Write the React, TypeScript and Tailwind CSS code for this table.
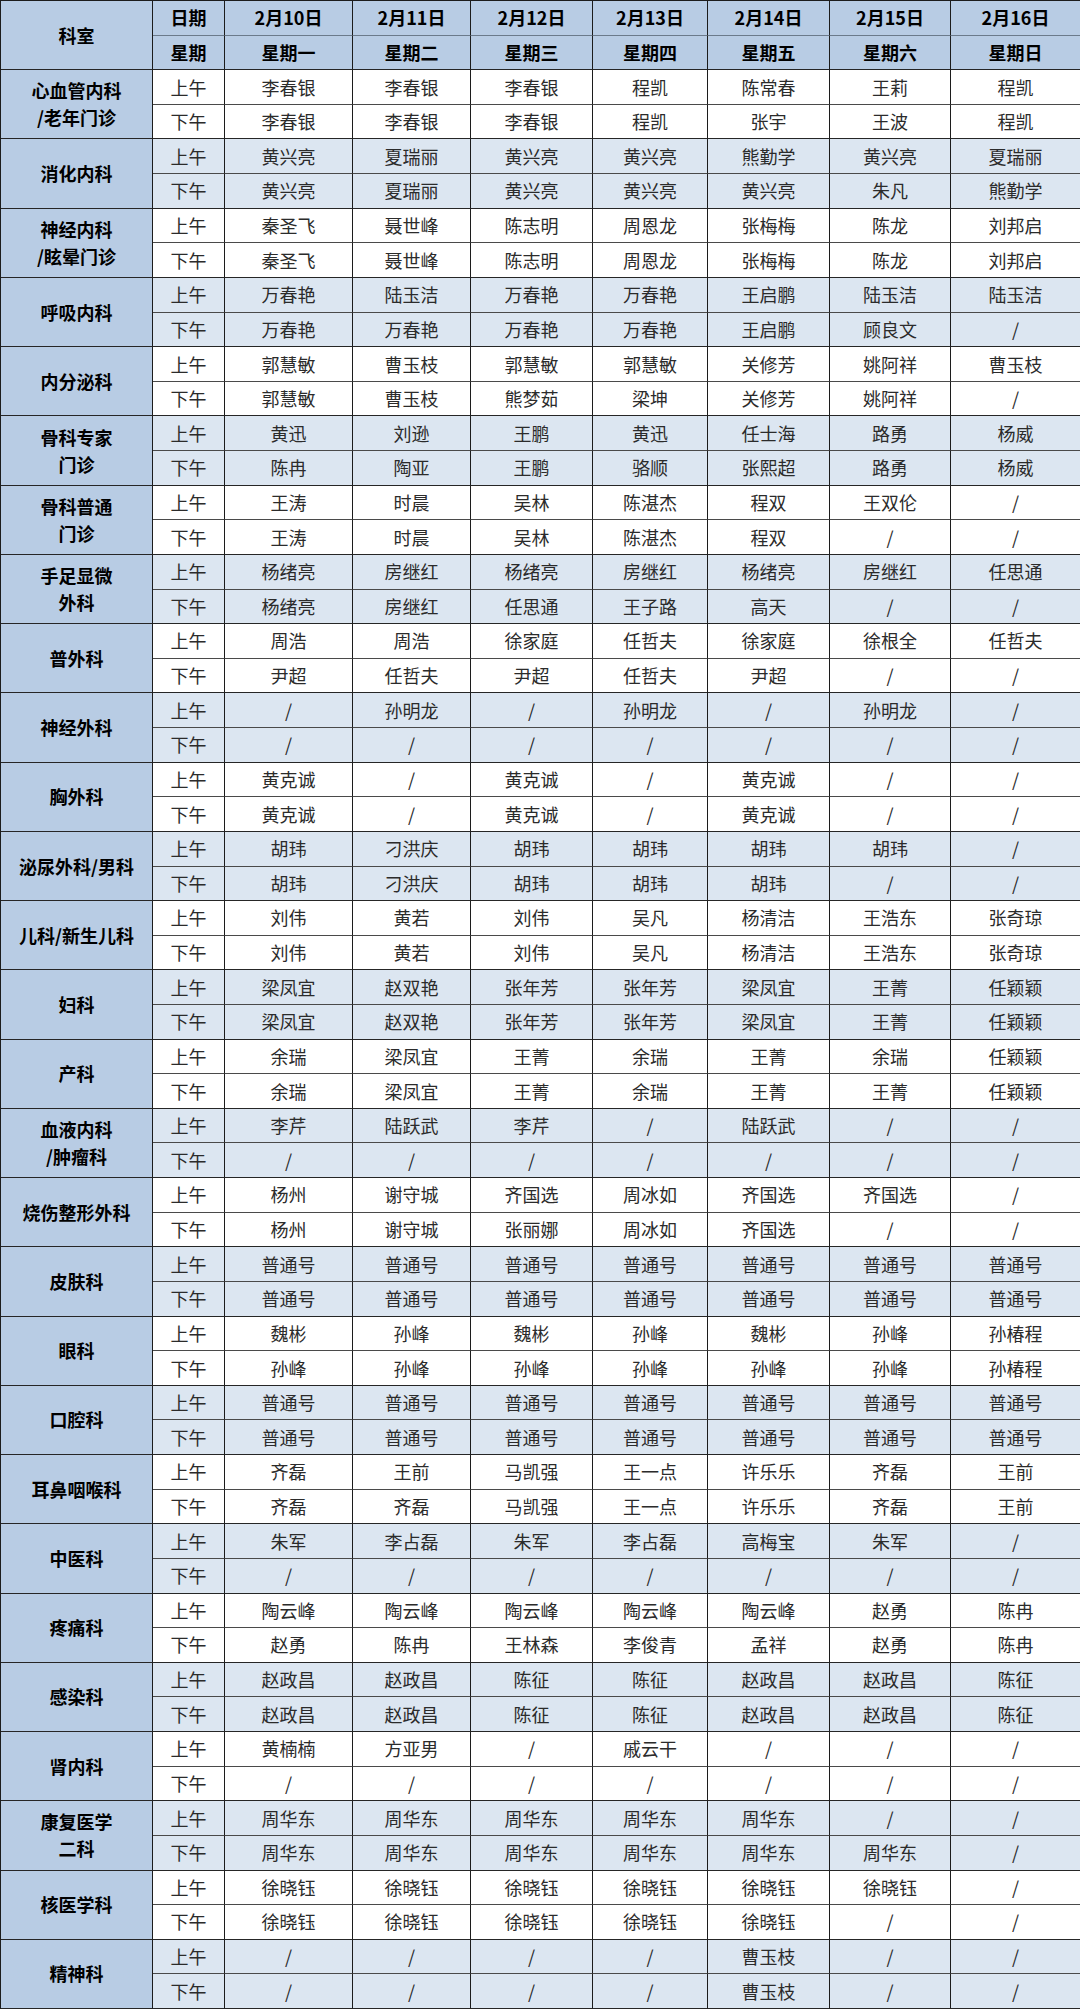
const days = [
  { date: "2月10日", week: "星期一" },
  { date: "2月11日", week: "星期二" },
  { date: "2月12日", week: "星期三" },
  { date: "2月13日", week: "星期四" },
  { date: "2月14日", week: "星期五" },
  { date: "2月15日", week: "星期六" },
  { date: "2月16日", week: "星期日" },
];

const S = "/";

// name: department label (\n = line break), am / pm: doctors for each day
const schedule: { name: string; am: string[]; pm: string[] }[] = [
  {
    name: "心血管内科\n/老年门诊",
    am: ["李春银", "李春银", "李春银", "程凯", "陈常春", "王莉", "程凯"],
    pm: ["李春银", "李春银", "李春银", "程凯", "张宇", "王波", "程凯"],
  },
  {
    name: "消化内科",
    am: ["黄兴亮", "夏瑞丽", "黄兴亮", "黄兴亮", "熊勤学", "黄兴亮", "夏瑞丽"],
    pm: ["黄兴亮", "夏瑞丽", "黄兴亮", "黄兴亮", "黄兴亮", "朱凡", "熊勤学"],
  },
  {
    name: "神经内科\n/眩晕门诊",
    am: ["秦圣飞", "聂世峰", "陈志明", "周恩龙", "张梅梅", "陈龙", "刘邦启"],
    pm: ["秦圣飞", "聂世峰", "陈志明", "周恩龙", "张梅梅", "陈龙", "刘邦启"],
  },
  {
    name: "呼吸内科",
    am: ["万春艳", "陆玉洁", "万春艳", "万春艳", "王启鹏", "陆玉洁", "陆玉洁"],
    pm: ["万春艳", "万春艳", "万春艳", "万春艳", "王启鹏", "顾良文", S],
  },
  {
    name: "内分泌科",
    am: ["郭慧敏", "曹玉枝", "郭慧敏", "郭慧敏", "关修芳", "姚阿祥", "曹玉枝"],
    pm: ["郭慧敏", "曹玉枝", "熊梦茹", "梁坤", "关修芳", "姚阿祥", S],
  },
  {
    name: "骨科专家\n门诊",
    am: ["黄迅", "刘逊", "王鹏", "黄迅", "任士海", "路勇", "杨威"],
    pm: ["陈冉", "陶亚", "王鹏", "骆顺", "张熙超", "路勇", "杨威"],
  },
  {
    name: "骨科普通\n门诊",
    am: ["王涛", "时晨", "吴林", "陈湛杰", "程双", "王双伦", S],
    pm: ["王涛", "时晨", "吴林", "陈湛杰", "程双", S, S],
  },
  {
    name: "手足显微\n外科",
    am: ["杨绪亮", "房继红", "杨绪亮", "房继红", "杨绪亮", "房继红", "任思通"],
    pm: ["杨绪亮", "房继红", "任思通", "王子路", "高天", S, S],
  },
  {
    name: "普外科",
    am: ["周浩", "周浩", "徐家庭", "任哲夫", "徐家庭", "徐根全", "任哲夫"],
    pm: ["尹超", "任哲夫", "尹超", "任哲夫", "尹超", S, S],
  },
  {
    name: "神经外科",
    am: [S, "孙明龙", S, "孙明龙", S, "孙明龙", S],
    pm: [S, S, S, S, S, S, S],
  },
  {
    name: "胸外科",
    am: ["黄克诚", S, "黄克诚", S, "黄克诚", S, S],
    pm: ["黄克诚", S, "黄克诚", S, "黄克诚", S, S],
  },
  {
    name: "泌尿外科/男科",
    am: ["胡玮", "刁洪庆", "胡玮", "胡玮", "胡玮", "胡玮", S],
    pm: ["胡玮", "刁洪庆", "胡玮", "胡玮", "胡玮", S, S],
  },
  {
    name: "儿科/新生儿科",
    am: ["刘伟", "黄若", "刘伟", "吴凡", "杨清洁", "王浩东", "张奇琼"],
    pm: ["刘伟", "黄若", "刘伟", "吴凡", "杨清洁", "王浩东", "张奇琼"],
  },
  {
    name: "妇科",
    am: ["梁凤宜", "赵双艳", "张年芳", "张年芳", "梁凤宜", "王菁", "任颖颖"],
    pm: ["梁凤宜", "赵双艳", "张年芳", "张年芳", "梁凤宜", "王菁", "任颖颖"],
  },
  {
    name: "产科",
    am: ["余瑞", "梁凤宜", "王菁", "余瑞", "王菁", "余瑞", "任颖颖"],
    pm: ["余瑞", "梁凤宜", "王菁", "余瑞", "王菁", "王菁", "任颖颖"],
  },
  {
    name: "血液内科\n/肿瘤科",
    am: ["李芹", "陆跃武", "李芹", S, "陆跃武", S, S],
    pm: [S, S, S, S, S, S, S],
  },
  {
    name: "烧伤整形外科",
    am: ["杨州", "谢守城", "齐国选", "周冰如", "齐国选", "齐国选", S],
    pm: ["杨州", "谢守城", "张丽娜", "周冰如", "齐国选", S, S],
  },
  {
    name: "皮肤科",
    am: ["普通号", "普通号", "普通号", "普通号", "普通号", "普通号", "普通号"],
    pm: ["普通号", "普通号", "普通号", "普通号", "普通号", "普通号", "普通号"],
  },
  {
    name: "眼科",
    am: ["魏彬", "孙峰", "魏彬", "孙峰", "魏彬", "孙峰", "孙椿程"],
    pm: ["孙峰", "孙峰", "孙峰", "孙峰", "孙峰", "孙峰", "孙椿程"],
  },
  {
    name: "口腔科",
    am: ["普通号", "普通号", "普通号", "普通号", "普通号", "普通号", "普通号"],
    pm: ["普通号", "普通号", "普通号", "普通号", "普通号", "普通号", "普通号"],
  },
  {
    name: "耳鼻咽喉科",
    am: ["齐磊", "王前", "马凯强", "王一点", "许乐乐", "齐磊", "王前"],
    pm: ["齐磊", "齐磊", "马凯强", "王一点", "许乐乐", "齐磊", "王前"],
  },
  {
    name: "中医科",
    am: ["朱军", "李占磊", "朱军", "李占磊", "高梅宝", "朱军", S],
    pm: [S, S, S, S, S, S, S],
  },
  {
    name: "疼痛科",
    am: ["陶云峰", "陶云峰", "陶云峰", "陶云峰", "陶云峰", "赵勇", "陈冉"],
    pm: ["赵勇", "陈冉", "王林森", "李俊青", "孟祥", "赵勇", "陈冉"],
  },
  {
    name: "感染科",
    am: ["赵政昌", "赵政昌", "陈征", "陈征", "赵政昌", "赵政昌", "陈征"],
    pm: ["赵政昌", "赵政昌", "陈征", "陈征", "赵政昌", "赵政昌", "陈征"],
  },
  {
    name: "肾内科",
    am: ["黄楠楠", "方亚男", S, "戚云干", S, S, S],
    pm: [S, S, S, S, S, S, S],
  },
  {
    name: "康复医学\n二科",
    am: ["周华东", "周华东", "周华东", "周华东", "周华东", S, S],
    pm: ["周华东", "周华东", "周华东", "周华东", "周华东", "周华东", S],
  },
  {
    name: "核医学科",
    am: ["徐晓钰", "徐晓钰", "徐晓钰", "徐晓钰", "徐晓钰", "徐晓钰", S],
    pm: ["徐晓钰", "徐晓钰", "徐晓钰", "徐晓钰", "徐晓钰", S, S],
  },
  {
    name: "精神科",
    am: [S, S, S, S, "曹玉枝", S, S],
    pm: [S, S, S, S, "曹玉枝", S, S],
  },
];

const cell = "flex items-center justify-center border-r border-r-[#1c1c1c] border-b";

export default function App() {
  return (
    <div
      className="grid h-[2009px] w-[1080px] grid-cols-[152px_72px_128px_118px_122px_115px_122px_121px_130px] grid-rows-[repeat(58,minmax(0,1fr))] border-l border-t border-[#1c1c1c] bg-white text-[18px] text-[#2b2b2b]"
      style={{ fontFamily: '"Noto Sans CJK SC", "Noto Sans", sans-serif' }}
    >
      {/* header */}
      <div className={`${cell} row-span-2 border-b-[#262626] bg-[#b8cce4] font-bold text-black`}>科室</div>
      <div className={`${cell} border-b-[#6b7a8b] bg-[#b8cce4] font-bold text-black`}>日期</div>
      {days.map((d) => (
        <div key={d.date} className={`${cell} border-b-[#6b7a8b] bg-[#b8cce4] font-bold text-black`}>
          {d.date}
        </div>
      ))}
      <div className={`${cell} border-b-[#262626] bg-[#b8cce4] font-bold text-black`}>星期</div>
      {days.map((d) => (
        <div key={d.week} className={`${cell} border-b-[#262626] bg-[#b8cce4] font-bold text-black`}>
          {d.week}
        </div>
      ))}

      {schedule.map((dept, i) => {
        const bg = i % 2 === 0 ? "bg-white" : "bg-[#dce6f1]";
        return [
          <div
            key={dept.name}
            className={`${cell} row-span-2 whitespace-pre-line border-b-[#262626] bg-[#b8cce4] text-center font-bold leading-[27px] text-black`}
          >
            {dept.name}
          </div>,
          <div key={dept.name + "am"} className={`${cell} border-b-[#4a4a4a] ${bg}`}>
            上午
          </div>,
          ...dept.am.map((n, j) => (
            <div key={dept.name + "am" + j} className={`${cell} border-b-[#4a4a4a] ${bg}`}>
              {n}
            </div>
          )),
          <div key={dept.name + "pm"} className={`${cell} border-b-[#262626] ${bg}`}>
            下午
          </div>,
          ...dept.pm.map((n, j) => (
            <div key={dept.name + "pm" + j} className={`${cell} border-b-[#262626] ${bg}`}>
              {n}
            </div>
          )),
        ];
      })}
    </div>
  );
}
